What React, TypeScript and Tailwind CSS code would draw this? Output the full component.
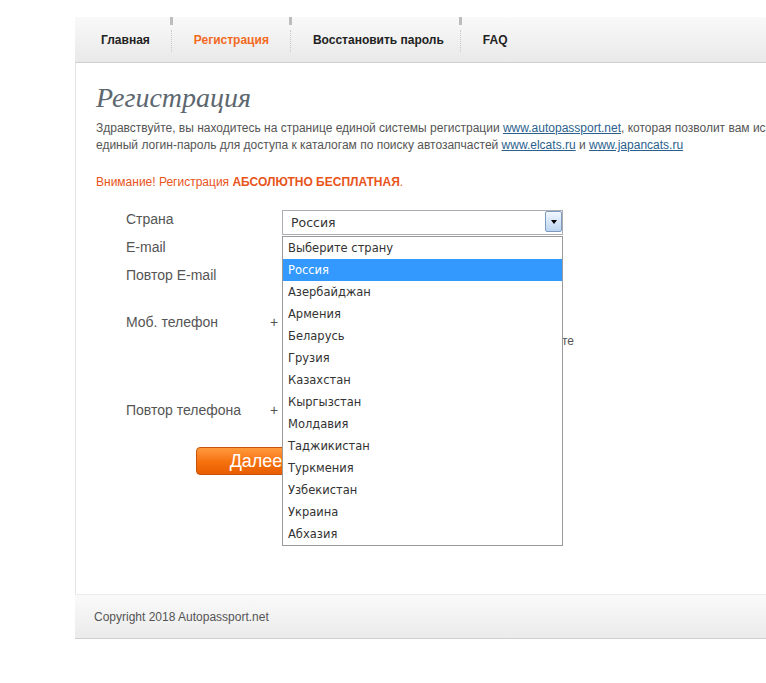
import React from "react";

const countries = [
  "Выберите страну",
  "Россия",
  "Азербайджан",
  "Армения",
  "Беларусь",
  "Грузия",
  "Казахстан",
  "Кыргызстан",
  "Молдавия",
  "Таджикистан",
  "Туркмения",
  "Узбекистан",
  "Украина",
  "Абхазия",
];

const navItems = ["Главная", "Регистрация", "Восстановить пароль", "FAQ"];

function NavSep() {
  return (
    <div className="flex h-full w-[3px] flex-col items-center">
      <div className="h-[8px] w-[3px] bg-[#bdbdbd]" />
      <div className="mt-[5px] h-[22px] border-l border-dotted border-[#c8c8c8]" />
    </div>
  );
}

export default function App() {
  return (
    <div className="h-[683px] w-[766px] overflow-hidden bg-white font-['Liberation_Sans',Arial,sans-serif]">
      <div className="ml-[75px] w-[960px] pt-[17px]">
        {/* nav */}
        <div className="flex h-[46px] items-start border-b border-[#cfcfcf] bg-gradient-to-b from-[#f9f9f9] to-[#e9e9e9]">
          {navItems.map((item, i) => (
            <React.Fragment key={item}>
              {i > 0 && <NavSep />}
              <div
                className={
                  "flex h-full items-center text-[12px] font-bold " +
                  (i === 0 ? "pl-[26px] " : "pl-[21px] ") +
                  (i === 2 ? "pr-[15px] " : "pr-[20px] ") +
                  (i === 1 ? "text-[#f26a21]" : "text-[#222]")
                }
              >
                {item}
              </div>
            </React.Fragment>
          ))}
        </div>

        {/* content */}
        <div className="border-l border-[#e6e6e6] pb-[119px] pl-[20px] pt-[18px]">
          <h1 className="font-['Liberation_Serif',Georgia,serif] text-[28px] italic leading-[34px] text-[#5d6770]">
            Регистрация
          </h1>
          <p className="mt-[5px] whitespace-nowrap text-[12px] leading-[17px] text-[#555]">
            Здравствуйте, вы находитесь на странице единой системы регистрации{" "}
            <a className="text-[#2b5f8e] underline">www.autopassport.net</a>, которая позволит вам использовать
            <br />
            единый логин-пароль для доступа к каталогам по поиску автозапчастей{" "}
            <a className="text-[#2b5f8e] underline">www.elcats.ru</a> и{" "}
            <a className="text-[#2b5f8e] underline">www.japancats.ru</a>
          </p>
          <p className="mt-[20px] text-[12px] leading-[17px] text-[#e8541a]">
            Внимание! Регистрация <b>АБСОЛЮТНО БЕСПЛАТНАЯ</b>.
          </p>

          {/* form */}
          <div className="mt-[19px] pl-[30px] text-[14px] leading-[18px] text-[#555]">
            <div className="flex h-[28px] items-start">
              <div className="w-[156px]">Страна</div>
              <div className="relative">
                <div className="flex h-[25px] w-[281px] items-center border border-[#abadb3] bg-white pl-[8px] font-['DejaVu_Sans',sans-serif] text-[12.5px] text-[#333]">
                  Россия
                  <div className="absolute right-[1px] top-[1px] flex h-[21px] w-[17px] items-center justify-center rounded-[2px] border border-[#7d9cc0] bg-gradient-to-b from-[#f2f7fd] to-[#bcd4f0]">
                    <div className="h-0 w-0 border-x-[3.5px] border-t-[4px] border-x-transparent border-t-black" />
                  </div>
                </div>
                <div className="absolute left-0 top-[26px] z-10 w-[281px] border border-[#9a9a9a] bg-white font-['DejaVu_Sans',sans-serif] text-[11.5px] text-[#333]">
                  {countries.map((c, i) => (
                    <div
                      key={c}
                      className={
                        "flex h-[22px] items-center pl-[5px] " +
                        (i === 1 ? "bg-[#3399ff] text-white" : "")
                      }
                    >
                      {c}
                    </div>
                  ))}
                </div>
              </div>
            </div>
            <div className="flex h-[28px] items-start">
              <div className="w-[156px]">E-mail</div>
              <input className="h-[22px] w-[200px] border border-[#ccc]" />
            </div>
            <div className="flex h-[47px] items-start">
              <div className="w-[156px]">Повтор E-mail</div>
              <input className="h-[22px] w-[200px] border border-[#ccc]" />
            </div>
            <div className="flex h-[88px] items-start">
              <div className="w-[140px]">Моб. телефон</div>
              <div className="w-[16px] text-center text-[14px]">+</div>
              <div>
                <input className="h-[20px] w-[150px] border border-[#ccc]" />
                <div className="flex w-[292px] justify-end overflow-hidden whitespace-nowrap text-[12px] leading-[16px] text-[#555]">
                  Номер вводите в международном формате, затем нажмите
                </div>
              </div>
            </div>
            <div className="flex h-[46px] items-start">
              <div className="w-[140px]">Повтор телефона</div>
              <div className="w-[16px] text-center text-[14px]">+</div>
              <input className="h-[22px] w-[150px] border border-[#ccc]" />
            </div>
            <div className="pl-[70px]">
              <button className="flex h-[28px] w-[120px] items-center justify-center rounded-[4px] border border-[#c9530a] bg-gradient-to-b from-[#ff9a3c] via-[#f6730f] to-[#e85d00] text-[18px] text-white">
                Далее
              </button>
            </div>
          </div>
        </div>

        {/* footer */}
        <div className="flex h-[45px] items-center border-b border-t border-b-[#cfcfcf] border-t-[#ececec] bg-gradient-to-b from-[#fafafa] to-[#ebebeb] pl-[19px] text-[12px] text-[#555]">
          Copyright 2018 Autopassport.net
        </div>
      </div>
    </div>
  );
}
